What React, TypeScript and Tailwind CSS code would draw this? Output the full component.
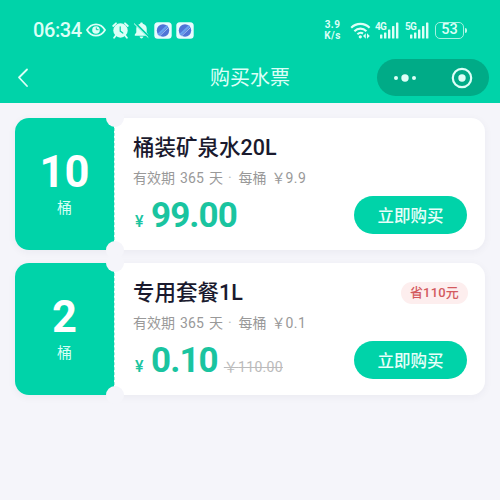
import React from "react";

interface Ticket {
  count: number;
  name: string;
  unitPrice: string;
  price: string;
  oldPrice?: string;
  tag?: string;
}

const tickets: Ticket[] = [
  { count: 10, name: "桶装矿泉水20L", unitPrice: "9.9", price: "99.00" },
  {
    count: 2,
    name: "专用套餐1L",
    unitPrice: "0.1",
    price: "0.10",
    oldPrice: "110.00",
    tag: "省110元",
  },
];

const EyeIcon = () => (
  <svg width="20" height="16" viewBox="0 0 20 16" fill="none">
    <path
      d="M1 8C3.2 4.200 6.400 2.300 10 2.300S16.800 4.200 19 8c-2.200 3.800-5.400 5.700-9 5.700S3.200 11.800 1 8Z"
      stroke="currentColor"
      strokeWidth="1.800"
    />
    <circle cx="10" cy="8" r="3.800" fill="currentColor" />
    <path d="M10.300 5.500v2.200h2.200" stroke="#00d3a9" strokeWidth="1" />
  </svg>
);

const AlarmIcon = () => (
  <svg width="17" height="17" viewBox="0 0 17 17" fill="none">
    <circle cx="8.500" cy="8.500" r="7.200" fill="currentColor" />
    <path
      d="M1.200 4 4 1.300M15.800 4 13 1.300M3.800 13.500l-1.700 2.300M13.200 13.500l1.700 2.300"
      stroke="currentColor"
      strokeWidth="1.800"
      strokeLinecap="round"
    />
    <path
      d="M8.200 4.800v4.300l2.600 2"
      stroke="#00d3a9"
      strokeWidth="1.200"
      strokeLinecap="round"
    />
  </svg>
);

const BellOffIcon = () => (
  <svg width="17" height="17" viewBox="0 0 17 17" fill="none">
    <path
      d="M8.500 0.500c.8 0 1.300.5 1.300 1.200 2.400.6 3.900 2.300 3.900 4.800v4l1.500 2v1.200H1.800v-1.200l1.500-2v-4c0-2.500 1.500-4.200 3.900-4.800 0-.7.5-1.200 1.300-1.200ZM6.600 14.600h3.800c-.2 1-.9 1.800-1.900 1.800s-1.700-.8-1.900-1.800Z"
      fill="currentColor"
    />
    <path d="M2.200 1.300 16 15" stroke="#00d3a9" strokeWidth="2.400" />
    <path
      d="M1.300 1.800 15 15.300"
      stroke="currentColor"
      strokeWidth="1"
      strokeLinecap="round"
    />
  </svg>
);

const AppBadge = () => (
  <svg width="18" height="17" viewBox="0 0 18 17" fill="none">
    <rect x="0.300" y="0.300" width="17.400" height="16.400" rx="3.500" fill="#e9fbff" />
    <circle cx="9" cy="8.500" r="6.200" fill="#4f74d6" />
    <path d="m4 12.800 9.500-9" stroke="#69a2f0" strokeWidth="2" />
    <path d="m5.500 14 9-8.500" stroke="#a9cdf8" strokeWidth="0.900" />
  </svg>
);

const WifiIcon = () => (
  <svg width="21" height="17" viewBox="0 0 21 17" fill="none">
    <path
      d="M1.200 5.800c5.200-5.200 13.200-5.200 18.400 0M4.400 9.200c3.400-3.400 8.600-3.400 12 0M7.400 12.300c1.800-1.700 3.800-1.900 5.600-.8"
      stroke="currentColor"
      strokeWidth="2.100"
    />
    <circle cx="10.300" cy="14.800" r="1.600" fill="currentColor" />
    <path
      d="m15.800 11.200v5.600l-2.800-2.800ZM17 11.200v5.600l2.800-2.800Z"
      fill="currentColor"
    />
  </svg>
);

const SignalBars = () => (
  <svg width="19" height="17" viewBox="0 0 19 17" fill="currentColor">
    <rect x="0" y="12.500" width="2.400" height="4" rx="0.600" />
    <rect x="4" y="10.500" width="2.400" height="6" rx="0.600" />
    <rect x="8" y="7.500" width="2.400" height="9" rx="0.600" />
    <rect x="12" y="4" width="2.400" height="12.500" rx="0.600" />
    <rect x="16" y="0.500" width="2.400" height="16" rx="0.600" />
  </svg>
);

const Signal = ({ label }: { label: string }) => (
  <div className="flex h-[17px] items-start">
    <span className="-mr-[6px] text-[10px] leading-[9px] font-bold tracking-[-0.8px]">
      {label}
    </span>
    <SignalBars />
  </div>
);

const StatusBar = () => (
  <div className="flex h-[52px] items-center justify-between pt-2 pr-[33px] pl-[33px] text-[#dcfff7]">
    <div className="flex items-center">
      <span className="mr-[5px] w-[48px] text-[20px] leading-none font-medium tracking-[-0.4px]">
        06:34
      </span>
      <EyeIcon />
      <div className="ml-[6px] flex gap-[4px]">
        <AlarmIcon />
        <BellOffIcon />
        <AppBadge />
        <AppBadge />
      </div>
    </div>
    <div className="flex items-center">
      <div className="mr-[8px] flex w-[19px] flex-col items-center text-[10px] font-bold tracking-[0.5px]">
        <span className="leading-[11px]">3.9</span>
        <span className="leading-[11px]">K/s</span>
      </div>
      <WifiIcon />
      <div className="ml-[4px] flex gap-[6px]">
        <Signal label="4G" />
        <Signal label="5G" />
      </div>
      <div className="ml-[6px] flex h-[17px] w-[29px] items-center justify-center rounded-[5px] border-[1.5px] border-[#a5f2e0] pt-px text-[14.500px] leading-none font-medium">
        53
      </div>
      <div className="ml-px h-[5px] w-[2px] rounded-r bg-[#bdf9ea]" />
    </div>
  </div>
);

const NavBar = () => (
  <div className="relative flex h-[51px] items-center justify-between pr-[11px] pl-[17px] text-[#dcfff7]">
    <svg width="12" height="20" viewBox="0 0 12 20" fill="none">
      <path
        d="M10 1.500 2 9.500l8 8.500"
        stroke="currentColor"
        strokeWidth="1.800"
        strokeLinecap="round"
        strokeLinejoin="round"
      />
    </svg>
    <h1 className="absolute inset-x-0 text-center text-[20px] leading-none">
      购买水票
    </h1>
    <div className="flex h-[37px] w-[112px] items-center justify-between rounded-full bg-[#00ab87] px-[16px]">
      <svg width="24" height="8" viewBox="0 0 24 8" fill="currentColor">
        <circle cx="3" cy="4" r="2" />
        <circle cx="12" cy="4" r="3.700" />
        <circle cx="21" cy="4" r="2" />
      </svg>
      <svg width="22" height="22" viewBox="0 0 22 22" fill="none">
        <circle cx="11" cy="11" r="9.200" stroke="currentColor" strokeWidth="2.200" />
        <circle cx="11" cy="11" r="3.700" fill="currentColor" />
      </svg>
    </div>
  </div>
);

const TicketCard = ({ ticket }: { ticket: Ticket }) => (
  <div className="relative flex h-[132px] rounded-[14px] bg-white shadow-[0_2px_8px_rgba(40,40,80,0.05)]">
    <div className="flex w-[99px] flex-col items-center rounded-l-[14px] bg-[#00d3a9] pt-[34px] text-white">
      <span className="text-[43.500px] leading-[42px] font-bold">
        {ticket.count}
      </span>
      <span className="mt-[4px] text-[15px] leading-[20px] text-[#d5fff5]">
        桶
      </span>
    </div>
    <div className="w-px border-l border-dashed border-[#a8e8dc]" />
    <div className="absolute -top-[9px] left-[91px] size-[18px] rounded-full bg-[#f5f5fa]" />
    <div className="absolute -bottom-[9px] left-[91px] size-[18px] rounded-full bg-[#f5f5fa]" />

    <div className="flex flex-1 flex-col pt-[15px] pr-[18px] pl-[18px]">
      <div className="flex h-[29px] items-center justify-between">
        <h2 className="pt-px text-[21.500px] leading-none font-medium text-[#1a1a2e]">
          {ticket.name}
        </h2>
        {ticket.tag && (
          <span className="-mr-px flex h-[22px] w-[67px] items-center justify-center rounded-full bg-[#fdeeee] text-[13px] font-medium tracking-[0.2px] text-[#d35a5e]">
            {ticket.tag}
          </span>
        )}
      </div>
      <p className="mt-[6px] text-[14px] leading-[20px] text-[#999]">
        有效期<span className="mx-[5px] tracking-[0.1px]">365</span>天
        <span className="mr-[7px] ml-[5px] text-[#bbb]">·</span>每桶
        <span className="ml-[5px]">￥</span>
        <span className="tracking-[0.4px]">{ticket.unitPrice}</span>
      </p>
      <div className="mt-[8px] flex h-[38px] items-center justify-between">
        <div className="flex items-baseline pt-[2px] text-[#1ac4a0]">
          <span className="w-[18px] pl-[2px] text-[16px] font-medium">¥</span>
          <span className="text-[35px] leading-[38px] font-bold tracking-[-0.9px]">
            {ticket.price}
          </span>
          {ticket.oldPrice && (
            <span className="ml-[6px] text-[14px] tracking-[0.3px] text-[#bbb] line-through">
              ￥{ticket.oldPrice}
            </span>
          )}
        </div>
        <button className="h-[38px] w-[113px] rounded-full bg-[#00d3a9] pt-[4px] text-[16.500px] leading-none font-medium text-[#e8fffa]">
          立即购买
        </button>
      </div>
    </div>
  </div>
);

const App = () => {
  return (
    <div className="h-[500px] w-[500px] overflow-hidden bg-[#f5f5fa] font-[Roboto,'Noto_Sans_CJK_SC',sans-serif]">
      <header className="bg-[#00d3a9]">
        <StatusBar />
        <NavBar />
      </header>
      <main className="flex flex-col gap-[13px] px-[15px] pt-[15px]">
        {tickets.map((ticket) => (
          <TicketCard ticket={ticket} key={ticket.name} />
        ))}
      </main>
    </div>
  );
};

export default App;
